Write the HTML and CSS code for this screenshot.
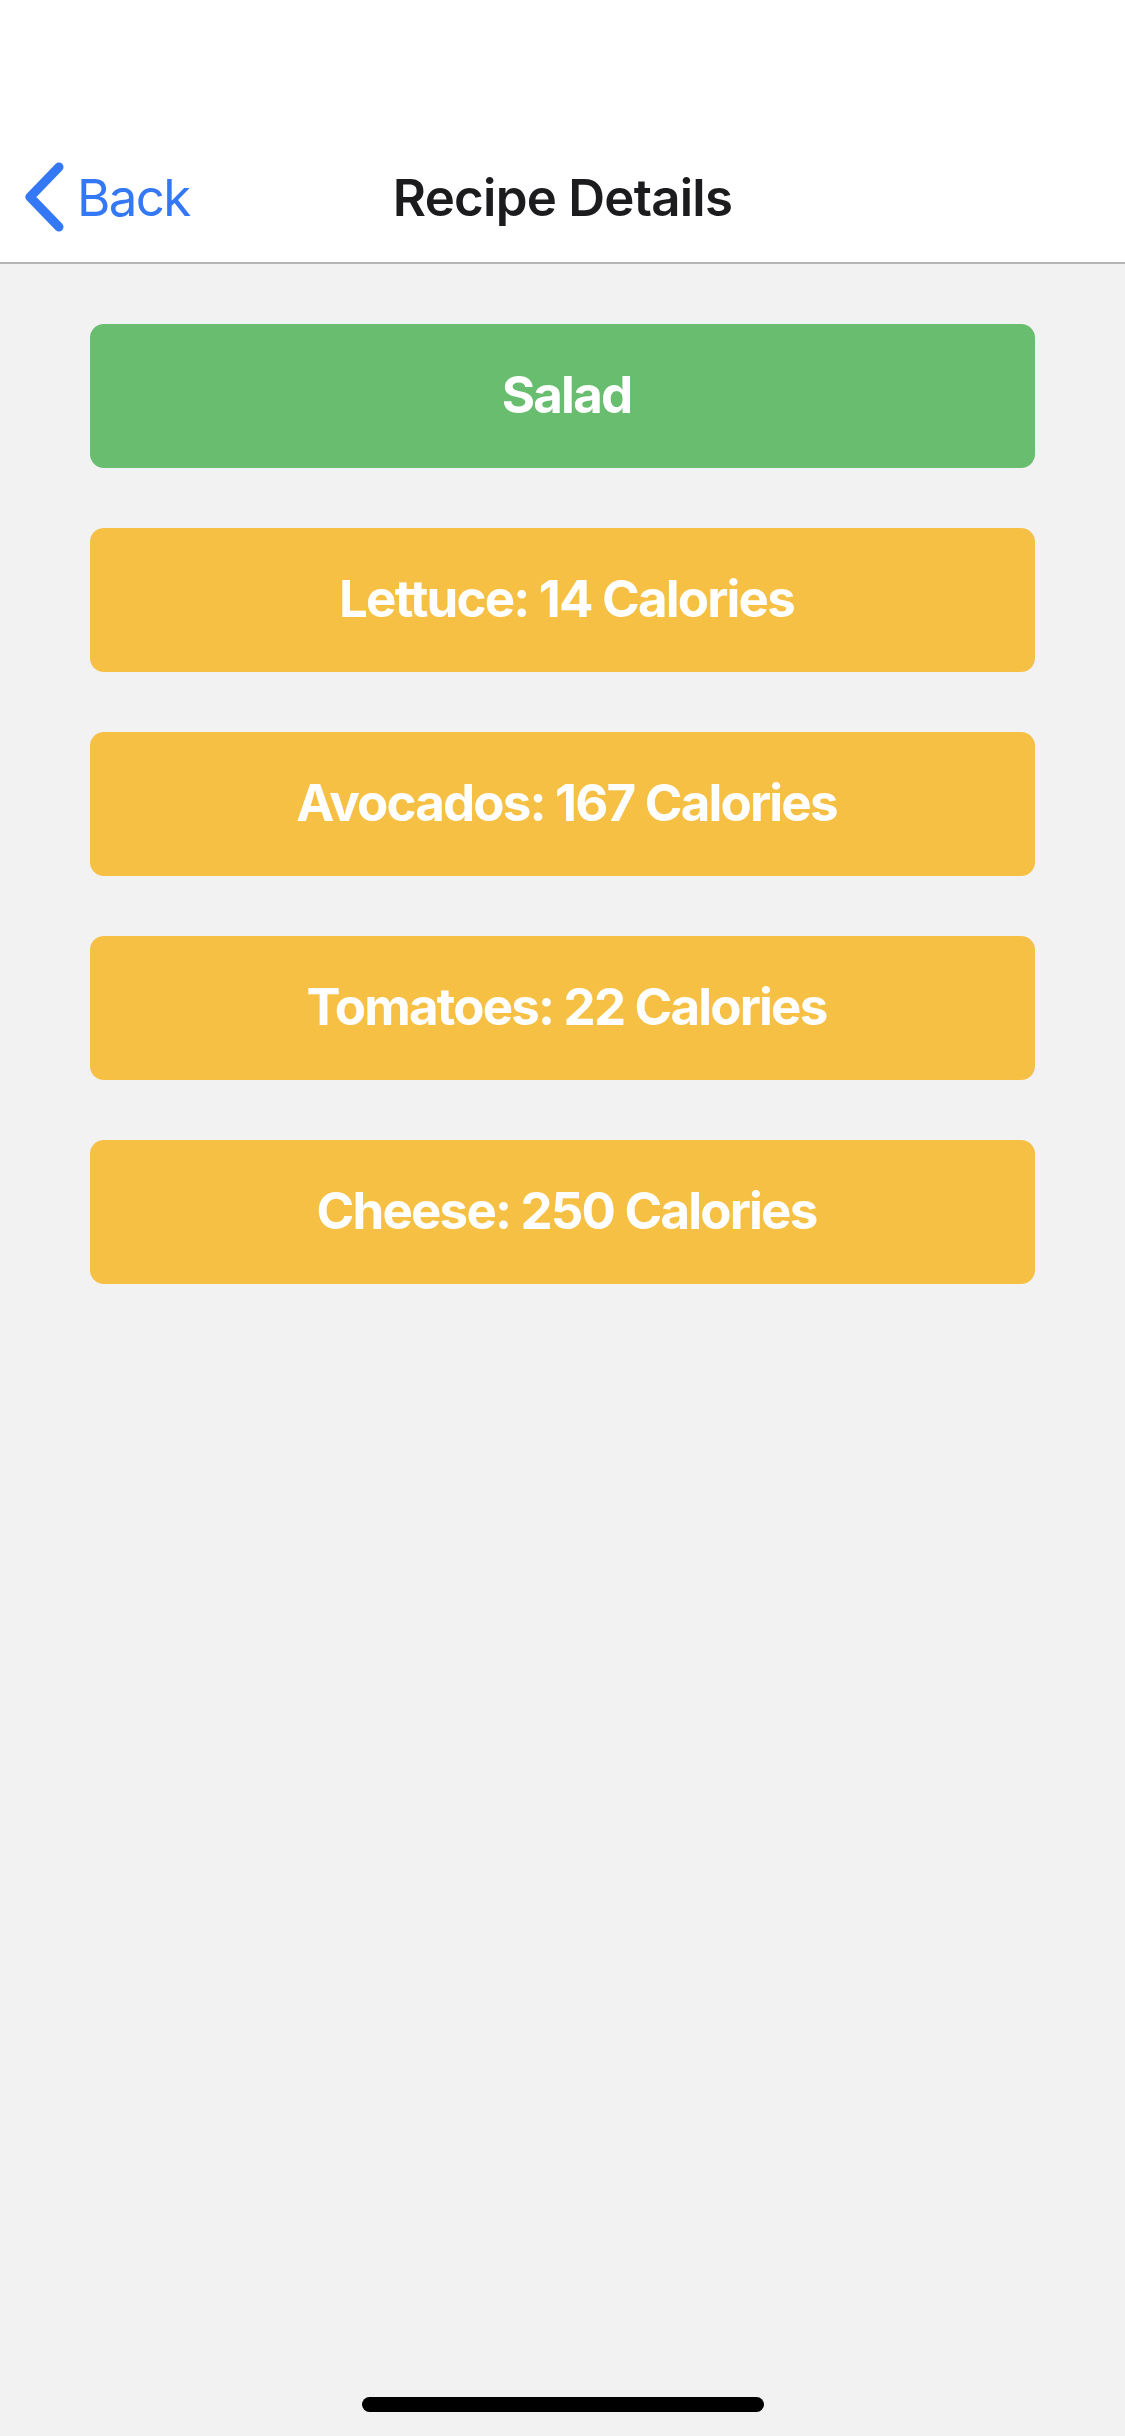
FILE: index.html
```html
<!DOCTYPE html>
<html>
<head>
<meta charset="utf-8">
<link rel="stylesheet" href="styles.css">
</head>
<body>
<div class="screen">
  <header class="header">
    <div class="status"></div>
    <nav class="nav">
      <div class="back">
        <svg class="chev" width="42" height="70" viewBox="0 0 42 70">
          <polyline points="35,5 6,35 35,65" fill="none" stroke="#3478F6" stroke-width="9" stroke-linecap="round" stroke-linejoin="round"/>
        </svg>
        <span class="back-text">Back</span>
      </div>
      <div class="title">Recipe Details</div>
      <div class="spacer"></div>
    </nav>
  </header>
  <main class="list">
    <div class="card card-green">Salad</div>
    <div class="card card-yellow">Lettuce: 14 Calories</div>
    <div class="card card-yellow">Avocados: 167 Calories</div>
    <div class="card card-yellow">Tomatoes: 22 Calories</div>
    <div class="card card-yellow">Cheese: 250 Calories</div>
  </main>
  <div class="home-area"><div class="home-bar"></div></div>
</div>
</body>
</html>
```
FILE: styles.css
```css
html, body {
  margin: 0;
  padding: 0;
}
body {
  background: #f2f2f2;
  font-family: Inter, "Liberation Sans", sans-serif;
  width: 1125px;
  height: 2436px;
  overflow: hidden;
}
.screen {
  display: flex;
  flex-direction: column;
  height: 2436px;
}
.header {
  background: #ffffff;
  border-bottom: 2px solid #b4b4b4;
  height: 262px;
  display: flex;
  flex-direction: column;
}
.status {
  height: 132px;
}
.nav {
  flex: 1;
  display: grid;
  grid-template-columns: 1fr auto 1fr;
  align-items: center;
}
.back {
  display: flex;
  align-items: center;
  padding-left: 24px;
  color: #3478F6;
}
.chev {
  display: block;
  margin-right: 11px;
}
.back-text {
  font-size: 51px;
  font-weight: 400;
  letter-spacing: -1.6px;
}
.title {
  font-size: 51px;
  font-weight: 600;
  color: #1c1c1e;
  letter-spacing: -0.75px;
}
.list {
  flex: 1;
  display: flex;
  flex-direction: column;
  gap: 60px;
  padding: 60px 90px 0 90px;
}
.card {
  height: 144px;
  box-sizing: border-box;
  padding: 0 0 3px 8px;
  border-radius: 14px;
  display: flex;
  align-items: center;
  justify-content: center;
  color: #ffffff;
  font-size: 51px;
  font-weight: 700;
  letter-spacing: -1.8px;
}
.card-green {
  background: #69bd6f;
}
.card-yellow {
  background: #f5c044;
}
.home-area {
  height: 39px;
  display: flex;
  justify-content: center;
  align-items: flex-start;
}
.home-bar {
  width: 402px;
  height: 15px;
  background: #000000;
  border-radius: 8px;
}
```
